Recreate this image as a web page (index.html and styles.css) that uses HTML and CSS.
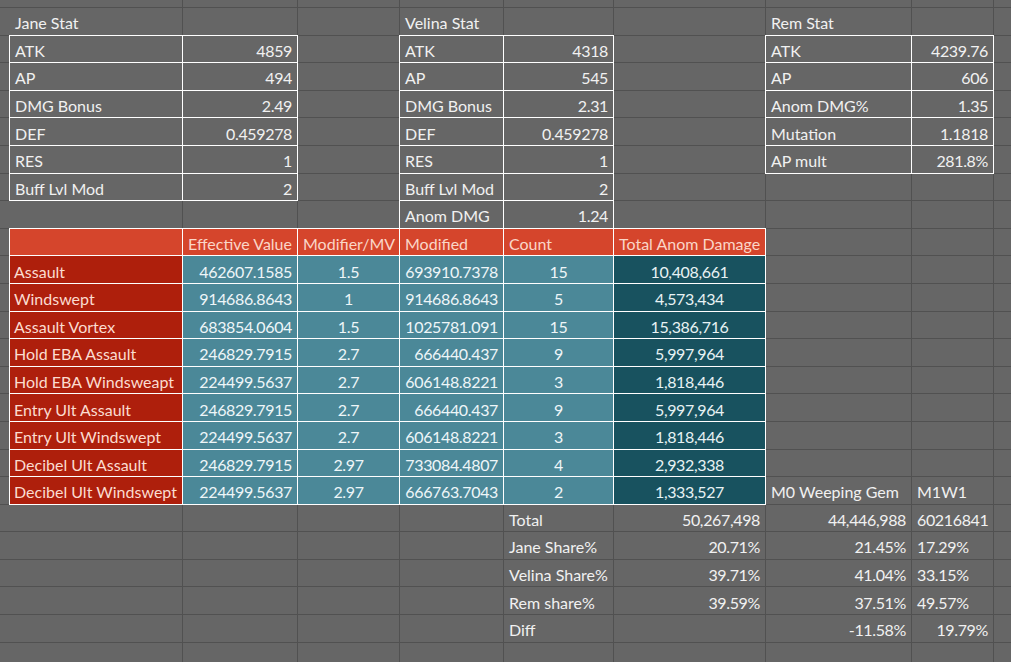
FILE: index.html
```html
<!DOCTYPE html>
<html lang="en">
<head>
<meta charset="utf-8">
<title>Anomaly Damage Sheet</title>
<link rel="stylesheet" href="styles.css">
</head>
<body>
<div class="sheet">
  <!-- row 0 -->
  <div class="c"></div><div class="c"></div><div class="c"></div><div class="c"></div><div class="c"></div><div class="c"></div><div class="c"></div><div class="c"></div><div class="c"></div><div class="c"></div>
  <!-- row 1 -->
  <div class="c"></div><div class="c">Jane Stat</div><div class="c"></div><div class="c"></div><div class="c">Velina Stat</div><div class="c"></div><div class="c"></div><div class="c">Rem Stat</div><div class="c"></div><div class="c"></div>
  <!-- row 2 -->
  <div class="c"></div><div class="c w">ATK</div><div class="c w r">4859</div><div class="c"></div><div class="c w">ATK</div><div class="c w r">4318</div><div class="c"></div><div class="c w">ATK</div><div class="c w r">4239.76</div><div class="c"></div>
  <!-- row 3 -->
  <div class="c"></div><div class="c w">AP</div><div class="c w r">494</div><div class="c"></div><div class="c w">AP</div><div class="c w r">545</div><div class="c"></div><div class="c w">AP</div><div class="c w r">606</div><div class="c"></div>
  <!-- row 4 -->
  <div class="c"></div><div class="c w">DMG Bonus</div><div class="c w r">2.49</div><div class="c"></div><div class="c w">DMG Bonus</div><div class="c w r">2.31</div><div class="c"></div><div class="c w">Anom DMG%</div><div class="c w r">1.35</div><div class="c"></div>
  <!-- row 5 -->
  <div class="c"></div><div class="c w">DEF</div><div class="c w r">0.459278</div><div class="c"></div><div class="c w">DEF</div><div class="c w r">0.459278</div><div class="c"></div><div class="c w">Mutation</div><div class="c w r">1.1818</div><div class="c"></div>
  <!-- row 6 -->
  <div class="c"></div><div class="c w">RES</div><div class="c w r">1</div><div class="c"></div><div class="c w">RES</div><div class="c w r">1</div><div class="c"></div><div class="c w">AP mult</div><div class="c w r">281.8%</div><div class="c"></div>
  <!-- row 7 -->
  <div class="c"></div><div class="c w">Buff Lvl Mod</div><div class="c w r">2</div><div class="c"></div><div class="c w">Buff Lvl Mod</div><div class="c w r">2</div><div class="c"></div><div class="c"></div><div class="c"></div><div class="c"></div>
  <!-- row 8 -->
  <div class="c"></div><div class="c"></div><div class="c"></div><div class="c"></div><div class="c w">Anom DMG</div><div class="c w r">1.24</div><div class="c"></div><div class="c"></div><div class="c"></div><div class="c"></div>
  <!-- row 9 header -->
  <div class="c"></div><div class="c w hd"></div><div class="c w hd">Effective Value</div><div class="c w hd">Modifier/MV</div><div class="c w hd">Modified</div><div class="c w hd">Count</div><div class="c w hd">Total Anom Damage</div><div class="c"></div><div class="c"></div><div class="c"></div>
  <!-- row 10 -->
  <div class="c"></div><div class="c w lb">Assault</div><div class="c w tl r">462607.1585</div><div class="c w tl m">1.5</div><div class="c w tl r">693910.7378</div><div class="c w tl m">15</div><div class="c w dk m">10,408,661</div><div class="c"></div><div class="c"></div><div class="c"></div>
  <!-- row 11 -->
  <div class="c"></div><div class="c w lb">Windswept</div><div class="c w tl r">914686.8643</div><div class="c w tl m">1</div><div class="c w tl r">914686.8643</div><div class="c w tl m">5</div><div class="c w dk m">4,573,434</div><div class="c"></div><div class="c"></div><div class="c"></div>
  <!-- row 12 -->
  <div class="c"></div><div class="c w lb">Assault Vortex</div><div class="c w tl r">683854.0604</div><div class="c w tl m">1.5</div><div class="c w tl r">1025781.091</div><div class="c w tl m">15</div><div class="c w dk m">15,386,716</div><div class="c"></div><div class="c"></div><div class="c"></div>
  <!-- row 13 -->
  <div class="c"></div><div class="c w lb">Hold EBA Assault</div><div class="c w tl r">246829.7915</div><div class="c w tl m">2.7</div><div class="c w tl r">666440.437</div><div class="c w tl m">9</div><div class="c w dk m">5,997,964</div><div class="c"></div><div class="c"></div><div class="c"></div>
  <!-- row 14 -->
  <div class="c"></div><div class="c w lb">Hold EBA Windsweapt</div><div class="c w tl r">224499.5637</div><div class="c w tl m">2.7</div><div class="c w tl r">606148.8221</div><div class="c w tl m">3</div><div class="c w dk m">1,818,446</div><div class="c"></div><div class="c"></div><div class="c"></div>
  <!-- row 15 -->
  <div class="c"></div><div class="c w lb">Entry Ult Assault</div><div class="c w tl r">246829.7915</div><div class="c w tl m">2.7</div><div class="c w tl r">666440.437</div><div class="c w tl m">9</div><div class="c w dk m">5,997,964</div><div class="c"></div><div class="c"></div><div class="c"></div>
  <!-- row 16 -->
  <div class="c"></div><div class="c w lb">Entry Ult Windswept</div><div class="c w tl r">224499.5637</div><div class="c w tl m">2.7</div><div class="c w tl r">606148.8221</div><div class="c w tl m">3</div><div class="c w dk m">1,818,446</div><div class="c"></div><div class="c"></div><div class="c"></div>
  <!-- row 17 -->
  <div class="c"></div><div class="c w lb">Decibel Ult Assault</div><div class="c w tl r">246829.7915</div><div class="c w tl m">2.97</div><div class="c w tl r">733084.4807</div><div class="c w tl m">4</div><div class="c w dk m">2,932,338</div><div class="c"></div><div class="c"></div><div class="c"></div>
  <!-- row 18 -->
  <div class="c"></div><div class="c w lb">Decibel Ult Windswept</div><div class="c w tl r">224499.5637</div><div class="c w tl m">2.97</div><div class="c w tl r">666763.7043</div><div class="c w tl m">2</div><div class="c w dk m">1,333,527</div><div class="c">M0 Weeping Gem</div><div class="c">M1W1</div><div class="c"></div>
  <!-- row 19 -->
  <div class="c"></div><div class="c"></div><div class="c"></div><div class="c"></div><div class="c"></div><div class="c">Total</div><div class="c r">50,267,498</div><div class="c r">44,446,988</div><div class="c n">60216841</div><div class="c"></div>
  <!-- row 20 -->
  <div class="c"></div><div class="c"></div><div class="c"></div><div class="c"></div><div class="c"></div><div class="c">Jane Share%</div><div class="c r">20.71%</div><div class="c r">21.45%</div><div class="c n">17.29%</div><div class="c"></div>
  <!-- row 21 -->
  <div class="c"></div><div class="c"></div><div class="c"></div><div class="c"></div><div class="c"></div><div class="c">Velina Share%</div><div class="c r">39.71%</div><div class="c r">41.04%</div><div class="c n">33.15%</div><div class="c"></div>
  <!-- row 22 -->
  <div class="c"></div><div class="c"></div><div class="c"></div><div class="c"></div><div class="c"></div><div class="c">Rem share%</div><div class="c r">39.59%</div><div class="c r">37.51%</div><div class="c n">49.57%</div><div class="c"></div>
  <!-- row 23 -->
  <div class="c"></div><div class="c"></div><div class="c"></div><div class="c"></div><div class="c"></div><div class="c">Diff</div><div class="c"></div><div class="c r">-11.58%</div><div class="c r">19.79%</div><div class="c"></div>
  <!-- row 24 -->
  <div class="c"></div><div class="c"></div><div class="c"></div><div class="c"></div><div class="c"></div><div class="c"></div><div class="c"></div><div class="c"></div><div class="c"></div><div class="c"></div>
</div>
</body>
</html>
```
FILE: styles.css
```css
html, body {
  margin: 0;
  padding: 0;
  background: #666666;
  overflow: hidden;
}

.sheet {
  display: grid;
  grid-template-columns: 9px 172px 114px 101px 103px 109px 151px 145px 81px 1fr;
  grid-template-rows: 7px repeat(24, 26.6px);
  gap: 1px;
  background: #515151;
  width: 1011px;
  height: 662px;
  overflow: hidden;
  font-family: "Lato", "Liberation Sans", sans-serif;
  font-size: 16px;
  line-height: 1.15;
  color: #f1f1f1;
}

.c {
  background: #666666;
  display: flex;
  align-items: flex-end;
  padding: 0 5px 2px 5px;
  white-space: nowrap;
  overflow: visible;
  min-width: 0;
}

.w {
  box-shadow: 0 0 0 1px #ffffff;
}

.r {
  justify-content: flex-end;
  letter-spacing: -0.35px;
}

.m {
  justify-content: center;
  letter-spacing: -0.35px;
}

.n {
  letter-spacing: -0.35px;
}

.hd {
  background: #d5452c;
  color: #fad6c8;
}

.lb {
  background: #ae1f0c;
  color: #fbdcd0;
  padding-left: 4px;
}

.tl {
  background: #4b8898;
  color: #eef6f8;
}

.dk {
  background: #18525f;
  color: #e8f2f4;
}
```
